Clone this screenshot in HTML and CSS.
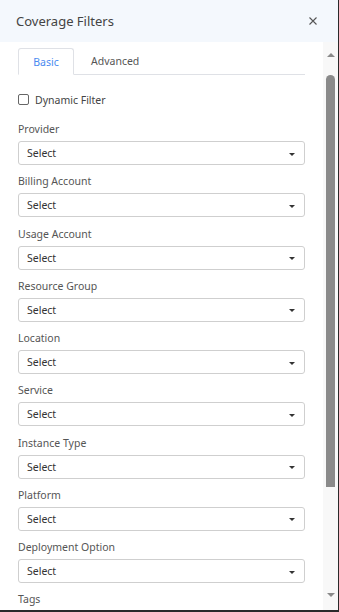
FILE: index.html
```html
<!DOCTYPE html>
<html>
<head>
<meta charset="utf-8">
<link rel="stylesheet" href="styles.css">
</head>
<body>
<div class="panel">
  <div class="header">
    <span class="title">Coverage Filters</span>
    <svg class="close" width="10" height="10" viewBox="0 0 10 10"><path d="M1.5 1.5L8.5 8.5M8.5 1.5L1.5 8.5" stroke="#555" stroke-width="1.1" fill="none"/></svg>
  </div>
  <div class="main">
    <div class="content">
      <div class="tabs">
        <div class="tab active">Basic</div>
        <div class="tab">Advanced</div>
      </div>
      <label class="check"><span class="box"></span><span>Dynamic Filter</span></label>
      <div class="group"><div class="label">Provider</div><div class="select"><span>Select</span><span class="caret"></span></div></div>
      <div class="group"><div class="label">Billing Account</div><div class="select"><span>Select</span><span class="caret"></span></div></div>
      <div class="group"><div class="label">Usage Account</div><div class="select"><span>Select</span><span class="caret"></span></div></div>
      <div class="group"><div class="label">Resource Group</div><div class="select"><span>Select</span><span class="caret"></span></div></div>
      <div class="group"><div class="label">Location</div><div class="select"><span>Select</span><span class="caret"></span></div></div>
      <div class="group"><div class="label">Service</div><div class="select"><span>Select</span><span class="caret"></span></div></div>
      <div class="group"><div class="label">Instance Type</div><div class="select"><span>Select</span><span class="caret"></span></div></div>
      <div class="group"><div class="label">Platform</div><div class="select"><span>Select</span><span class="caret"></span></div></div>
      <div class="group"><div class="label">Deployment Option</div><div class="select"><span>Select</span><span class="caret"></span></div></div>
      <div class="group"><div class="label">Tags</div></div>
    </div>
    <div class="scrollbar">
      <span class="arrow up"></span>
      <div class="track"><div class="thumb"></div></div>
      <span class="arrow down"></span>
    </div>
  </div>
</div>
</body>
</html>
```
FILE: styles.css
```css
html, body {
  margin: 0;
  padding: 0;
}
body {
  background: #2a2a2a;
  width: 339px;
  height: 612px;
  overflow: hidden;
  font-family: "Noto Sans", "Open Sans", sans-serif;
}
.panel {
  width: 338px;
  height: 610px;
  background: #fff;
  display: flex;
  flex-direction: column;
  overflow: hidden;
}
.header {
  height: 42px;
  flex: none;
  background: #f4f8fd;
  display: flex;
  align-items: center;
  justify-content: space-between;
  padding: 0 20px 0 16px;
}
.title {
  font-size: 13px;
  color: #444;
}
.close {
  display: block;
}
.main {
  flex: 1;
  display: flex;
  min-height: 0;
}
.content {
  flex: 1;
  padding: 6px 18px 0 18px;
  overflow: hidden;
}
.tabs {
  display: flex;
  border-bottom: 1px solid #dfe1e6;
  height: 26px;
}
.tab {
  font-size: 10.5px;
  color: #555;
  display: flex;
  align-items: center;
  justify-content: center;
  padding: 0 17px;
  height: 26px;
  box-sizing: border-box;
}
.tab.active {
  color: #4a8af0;
  border: 1px solid #dfe1e6;
  border-bottom: 1px solid #fff;
  border-radius: 3px 3px 0 0;
  width: 56px;
  padding: 0;
  height: 27px;
  background: #fff;
}
.check {
  display: flex;
  align-items: center;
  gap: 6px;
  height: 17px;
  margin-top: 16px;
  font-size: 10.5px;
  color: #444;
}
.box {
  width: 9px;
  height: 9px;
  border: 1px solid #666;
  border-radius: 2px;
  flex: none;
}
.group + .group {
  margin-top: 8.25px;
}
.check + .group {
  margin-top: 13px;
}
.label {
  font-size: 10.5px;
  color: #555;
  height: 16px;
  line-height: 16px;
  margin-bottom: 4px;
}
.select {
  height: 24px;
  box-sizing: border-box;
  border: 1px solid #cfcfcf;
  border-radius: 3px;
  display: flex;
  align-items: center;
  justify-content: space-between;
  padding: 0 9px 0 8px;
  font-size: 10.5px;
  color: #333;
}
.caret {
  width: 0;
  height: 0;
  border-left: 3px solid transparent;
  border-right: 3px solid transparent;
  border-top: 3px solid #333;
  margin-top: 2px;
}
.scrollbar {
  width: 15px;
  flex: none;
  background: #f8f8f8;
  display: flex;
  flex-direction: column;
  align-items: center;
  padding: 11px 0 13px 0;
  box-sizing: border-box;
}
.arrow {
  width: 0;
  height: 0;
  border-left: 4px solid transparent;
  border-right: 4px solid transparent;
  flex: none;
}
.arrow.up {
  border-bottom: 4px solid #8a8a8a;
}
.arrow.down {
  border-top: 4px solid #8a8a8a;
}
.track {
  flex: 1;
  width: 100%;
  display: flex;
  justify-content: center;
  padding-top: 18px;
}
.thumb {
  width: 9px;
  height: 412px;
  background: #8a8a8a;
  border-radius: 5px 5px 0 0;
}
```
